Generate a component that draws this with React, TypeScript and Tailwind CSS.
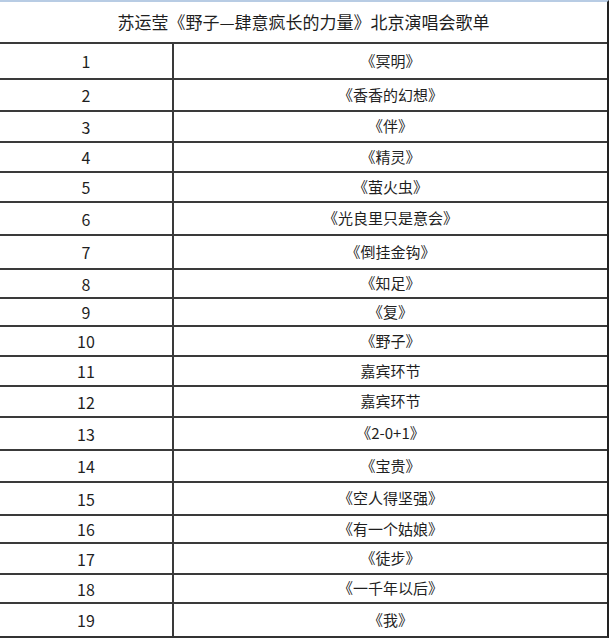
const rows: { n: number; title: string; h: number }[] = [
  { n: 1, title: "《冥明》", h: 36 },
  { n: 2, title: "《香香的幻想》", h: 32 },
  { n: 3, title: "《伴》", h: 31 },
  { n: 4, title: "《精灵》", h: 30 },
  { n: 5, title: "《萤火虫》", h: 30 },
  { n: 6, title: "《光良里只是意会》", h: 33 },
  { n: 7, title: "《倒挂金钩》", h: 34 },
  { n: 8, title: "《知足》", h: 29 },
  { n: 9, title: "《复》", h: 28 },
  { n: 10, title: "《野子》", h: 30 },
  { n: 11, title: "嘉宾环节", h: 30 },
  { n: 12, title: "嘉宾环节", h: 31 },
  { n: 13, title: "《2-0+1》", h: 33 },
  { n: 14, title: "《宝贵》", h: 32 },
  { n: 15, title: "《空人得坚强》", h: 33 },
  { n: 16, title: "《有一个姑娘》", h: 28 },
  { n: 17, title: "《徒步》", h: 31 },
  { n: 18, title: "《一千年以后》", h: 29 },
  { n: 19, title: "《我》", h: 34 },
];

export default function App() {
  return (
    <div
      className="w-[610px] h-[640px] bg-white text-[#1f1f1f]"
      style={{ fontFamily: '"Noto Sans CJK SC", "Noto Sans", sans-serif' }}
    >
      <div className="w-[609px] border-t-2 border-t-[#b8cce4] border-r-2 border-r-[#222] border-b-2 border-b-[#333]">
        <div className="h-[42px] flex items-center justify-center text-[17px] border-b-2 border-[#3a3a3a]">
          苏运莹《野子—肆意疯长的力量》北京演唱会歌单
        </div>
        {rows.map((r, i) => (
          <div
            key={r.n}
            className={`flex text-[15px] ${i < rows.length - 1 ? "border-b-2 border-[#3a3a3a]" : ""}`}
            style={{ height: i < rows.length - 1 ? r.h : r.h - 2 }}
          >
            <div className="w-[174px] shrink-0 flex items-center justify-center text-[16px] border-r-2 border-[#3a3a3a]">
              {r.n}
            </div>
            <div className="flex-1 flex items-center justify-center">{r.title}</div>
          </div>
        ))}
      </div>
    </div>
  );
}
